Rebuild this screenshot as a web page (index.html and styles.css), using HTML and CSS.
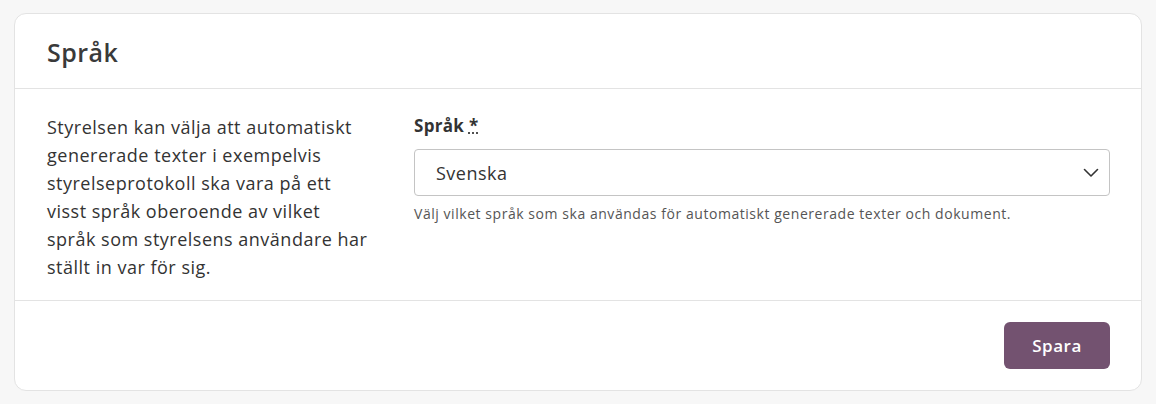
FILE: index.html
```html
<!DOCTYPE html>
<html lang="sv">
<head>
  <meta charset="UTF-8">
  <title>Språk</title>
  <link rel="stylesheet" href="styles.css">
</head>
<body>
  <div class="card">
    <div class="card-header">
      <h2>Språk</h2>
    </div>
    <div class="card-body">
      <p class="intro">Styrelsen kan välja att automatiskt genererade texter i exempelvis styrelseprotokoll ska vara på ett visst språk oberoende av vilket språk som styrelsens användare har ställt in var för sig.</p>
      <div class="field">
        <label for="language">Språk <abbr title="obligatoriskt">*</abbr></label>
        <div class="select-wrap">
          <select id="language" name="language">
            <option>Svenska</option>
            <option>English</option>
          </select>
          <svg class="chevron" width="16" height="10" viewBox="0 0 16 10"><path d="M1.5 1.5 L8 8 L14.5 1.5" fill="none" stroke="#333" stroke-width="1.6" stroke-linecap="round" stroke-linejoin="round"/></svg>
        </div>
        <p class="help">Välj vilket språk som ska användas för automatiskt genererade texter och dokument.</p>
      </div>
    </div>
    <div class="card-footer">
      <button type="button" class="save-btn">Spara</button>
    </div>
  </div>
</body>
</html>
```

FILE: styles.css
```css
body {
  margin: 0;
  padding: 13px 14px;
  background-color: #f7f7f7;
  font-family: "Open Sans", sans-serif;
  color: #333;
}
.card {
  background-color: white;
  border: 1px solid #e3e3e3;
  border-radius: 12px;
}
.card-header {
  padding: 22px 32px 20px;
  border-bottom: 1px solid #e3e3e3;
}
h2 {
  margin: 0;
  font-size: 25px;
  font-weight: 600;
  line-height: 32px;
  letter-spacing: 0.5px;
  color: #3a3a3a;
}
.card-body {
  display: grid;
  grid-template-columns: 322px 1fr;
  gap: 45px;
  padding: 24px 31px 19px 32px;
  border-bottom: 1px solid #e3e3e3;
}
.intro {
  margin: 0;
  font-size: 18px;
  line-height: 28px;
  letter-spacing: 0.5px;
}
.field label {
  display: block;
  font-size: 17px;
  font-weight: 700;
  line-height: 26px;
  letter-spacing: 0.3px;
  margin-bottom: 10px;
}
abbr {
  text-decoration: underline dotted;
}
.select-wrap {
  position: relative;
}
select {
  width: 100%;
  height: 47px;
  padding: 0 21px;
  font-family: inherit;
  font-size: 18px;
  letter-spacing: 0.5px;
  color: #333;
  background: white;
  border: 1px solid #c4c4c4;
  border-radius: 4px;
  appearance: none;
}
.chevron {
  position: absolute;
  right: 11px;
  top: 19px;
  pointer-events: none;
}
.help {
  margin: 8px 0 0;
  font-size: 14px;
  letter-spacing: 0.55px;
  color: #555;
}
.card-footer {
  display: flex;
  justify-content: flex-end;
  padding: 21px 31px 21px;
}
.save-btn {
  width: 106px;
  height: 47px;
  font-family: inherit;
  font-size: 17px;
  font-weight: 600;
  letter-spacing: 0.5px;
  color: white;
  background-color: #735270;
  border: none;
  border-radius: 6px;
  cursor: pointer;
}
```
